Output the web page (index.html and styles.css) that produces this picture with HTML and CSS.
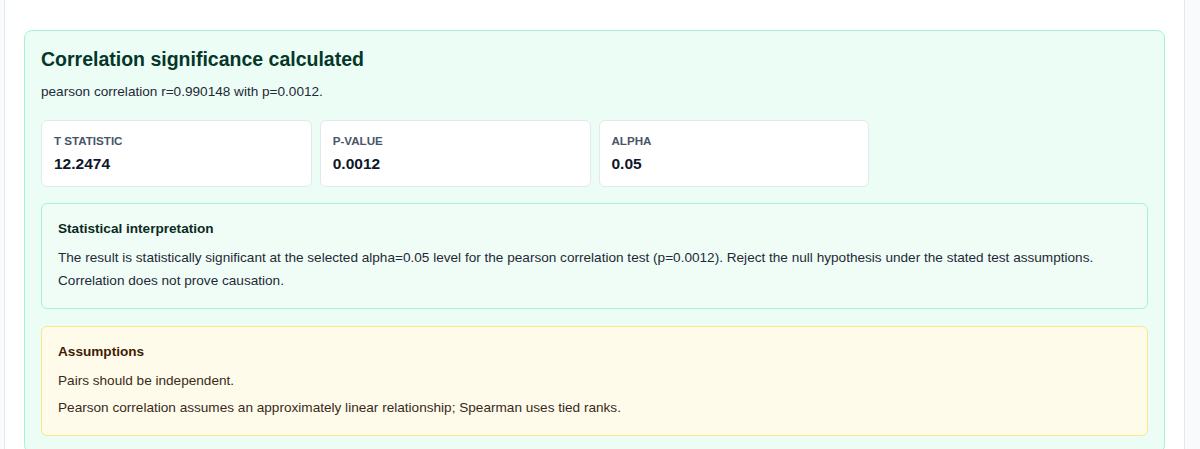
FILE: index.html
```html
<!DOCTYPE html>
<html lang="en">
<head>
    <meta charset="UTF-8">
    <meta name="viewport" content="width=device-width, initial-scale=1.0">
    <title>Correlation significance</title>
    <link rel="stylesheet" href="styles.css">
</head>
<body>
    <main class="panel">
        <section class="result-card">
            <h2 class="result-title">Correlation significance calculated</h2>
            <p class="result-summary">pearson correlation r=0.990148 with p=0.0012.</p>

            <div class="stats">
                <div class="stat">
                    <div class="stat-label">T statistic</div>
                    <div class="stat-value">12.2474</div>
                </div>
                <div class="stat">
                    <div class="stat-label">P-value</div>
                    <div class="stat-value">0.0012</div>
                </div>
                <div class="stat">
                    <div class="stat-label">Alpha</div>
                    <div class="stat-value">0.05</div>
                </div>
            </div>

            <div class="note note-interpretation">
                <h3 class="note-title">Statistical interpretation</h3>
                <p class="note-text">The result is statistically significant at the selected alpha=0.05 level for the pearson correlation test (p=0.0012). Reject the null hypothesis under the stated test assumptions. Correlation does not prove causation.</p>
            </div>

            <div class="note note-assumptions">
                <h3 class="note-title">Assumptions</h3>
                <ul class="assumption-list">
                    <li>Pairs should be independent.</li>
                    <li>Pearson correlation assumes an approximately linear relationship; Spearman uses tied ranks.</li>
                </ul>
            </div>
        </section>
    </main>
</body>
</html>
```

FILE: styles.css
```css
* {
    margin: 0;
    padding: 0;
    box-sizing: border-box;
}

body {
    font-family: 'Liberation Sans', Arial, sans-serif;
    background: #f8fafc;
    color: #1f2937;
    height: 100vh;
    overflow: hidden;
}

.panel {
    margin-left: 4px;
    width: 1181px;
    min-height: 100vh;
    background: #ffffff;
    border-left: 1px solid #e2e8f0;
    border-right: 1px solid #e2e8f0;
    padding: 30px 19px 0;
}

.result-card {
    background: #ecfdf5;
    border: 1px solid #a7f3d0;
    border-radius: 8px;
    padding: 16px;
}

.result-title {
    font-size: 19.5px;
    line-height: 24px;
    font-weight: bold;
    color: #04372a;
}

.result-summary {
    font-size: 13.6px;
    line-height: 20px;
    margin-top: 11px;
    margin-bottom: 18px;
    color: #1f2937;
}

.stats {
    display: grid;
    grid-template-columns: repeat(4, 1fr);
    gap: 8px;
}

.stat {
    background: #ffffff;
    border: 1px solid #e2e8f0;
    border-radius: 6px;
    padding: 12px;
}

.stat-label {
    font-size: 11.6px;
    line-height: 16px;
    font-weight: bold;
    text-transform: uppercase;
    color: #475569;
}

.stat-value {
    font-size: 15.5px;
    line-height: 20px;
    font-weight: bold;
    margin-top: 5px;
    color: #0f172a;
}

.note {
    margin-top: 16px;
    border: 1px solid;
    border-radius: 6px;
    padding: 16px;
}

.note-interpretation {
    background: #effdf6;
    border-color: #a7f3d0;
}

.note-assumptions {
    background: #fefbea;
    border-color: #fde68a;
    margin-top: 17px;
}

.note-title {
    font-size: 13.6px;
    line-height: 18px;
    font-weight: bold;
    color: #0b2a22;
}

.note-assumptions .note-title {
    color: #3f1d05;
}

.note-text {
    font-size: 13.6px;
    line-height: 23px;
    margin-top: 8px;
    color: #1f2937;
}

.assumption-list {
    list-style: none;
    margin-top: 8px;
    display: flex;
    flex-direction: column;
    gap: 4px;
    font-size: 13.6px;
    line-height: 23px;
    color: #3a2a1c;
}
```
